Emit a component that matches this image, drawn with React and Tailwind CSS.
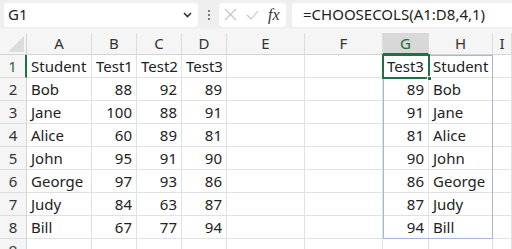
import React from 'react';

const cols = ['A', 'B', 'C', 'D', 'E', 'F', 'G', 'H', 'I'];

// cell content per row: [A, B, C, D, G, H]
const rows = [
  ['Student', 'Test1', 'Test2', 'Test3', 'Test3', 'Student'],
  ['Bob', 88, 92, 89, 89, 'Bob'],
  ['Jane', 100, 88, 91, 91, 'Jane'],
  ['Alice', 60, 89, 81, 81, 'Alice'],
  ['John', 95, 91, 90, 90, 'John'],
  ['George', 97, 93, 86, 86, 'George'],
  ['Judy', 84, 63, 87, 87, 'Judy'],
  ['Bill', 67, 77, 94, 94, 'Bill'],
];

const Cell = ({ value }) => {
  const isNum = typeof value === 'number';
  return (
    <div
      className={`h-[23px] border-r border-b border-[#e1e1e1] bg-white px-[4px] leading-[23px] whitespace-nowrap overflow-visible ${
        isNum ? 'text-right' : 'text-left'
      }`}
    >
      {value ?? ''}
    </div>
  );
};

export default function App() {
  return (
    <div className="w-[512px] h-[249px] overflow-hidden bg-white text-[#222] font-['Noto_Sans',sans-serif]">
      {/* Formula bar */}
      <div className="h-[29px] bg-[#efefef] flex items-center gap-0 pl-[4px]">
        <div className="w-[194px] h-[24px] bg-white rounded-[4px] flex items-center justify-between pl-[4px] pr-[6px] text-[15px]">
          <span>G1</span>
          <svg width="9" height="6" viewBox="0 0 9 6">
            <path d="M1 1l3.5 3.5L8 1" fill="none" stroke="#333" strokeWidth="1.6" />
          </svg>
        </div>
        <div className="w-[21px] flex flex-col items-center gap-[2px]">
          <span className="w-[2px] h-[2px] bg-[#555] rounded-full" />
          <span className="w-[2px] h-[2px] bg-[#555] rounded-full" />
          <span className="w-[2px] h-[2px] bg-[#555] rounded-full" />
        </div>
        <div className="w-[67px] h-[24px] bg-white rounded-[4px] flex items-center pl-[5px] gap-[9px]">
          <svg width="13" height="13" viewBox="0 0 13 13">
            <path d="M1 1l11 11M12 1L1 12" stroke="#c4c4c4" strokeWidth="1.1" />
          </svg>
          <svg width="13" height="10" viewBox="0 0 13 10">
            <path d="M1 5l4 4 7-8" fill="none" stroke="#c4c4c4" strokeWidth="1.1" />
          </svg>
          <span className="font-['Liberation_Serif',serif] italic text-[16px] text-[#333] leading-none">fx</span>
        </div>
        <div className="ml-[6px] flex-1 h-[24px] bg-white rounded-l-[4px] flex items-center pl-[11px] text-[15px]">
          =CHOOSECOLS(A1:D8,4,1)
        </div>
      </div>
      <div className="h-[4px] bg-[#f5f5f5]" />

      {/* Grid */}
      <div className="relative text-[15px]">
        <div className="grid grid-cols-[27px_65px_45px_45px_45px_78px_78px_46px_64px_1fr]">
          {/* header row */}
          <div className="h-[22px] bg-[#f5f5f5] border-r border-b border-[#d4d4d4] relative">
            <svg className="absolute right-[2px] bottom-[2px]" width="16" height="16" viewBox="0 0 16 16">
              <path d="M16 0L16 16L0 16Z" fill="#dcdcdc" />
            </svg>
          </div>
          {cols.map((c) => (
            <div
              key={c}
              className={`h-[22px] leading-[21px] text-center border-r border-[#dcdcdc] ${
                c === 'G'
                  ? 'bg-[#d8d8d8] text-[#1e6b3a] border-b-2 border-b-[#1e7145]'
                  : 'bg-[#f5f5f5] text-[#333] border-b border-b-[#d4d4d4]'
              }`}
            >
              {c}
            </div>
          ))}

          {/* data rows */}
          {rows.map((r, i) => (
            <React.Fragment key={i}>
              <div
                className={`h-[23px] leading-[23px] text-center bg-[#f5f5f5] border-b border-[#dcdcdc] ${
                  i === 0 ? 'text-[#1e6b3a] border-r-2 border-r-[#1e7145]' : 'text-[#333] border-r border-r-[#d4d4d4]'
                }`}
              >
                {i + 1}
              </div>
              <Cell value={r[0]} />
              <Cell value={r[1]} />
              <Cell value={r[2]} />
              <Cell value={r[3]} />
              <Cell />
              <Cell />
              <Cell value={r[4]} />
              <Cell value={r[5]} />
              <Cell />
            </React.Fragment>
          ))}

          {/* row 9 */}
          <div className="h-[23px] leading-[23px] text-center bg-[#f5f5f5] border-r border-[#d4d4d4] text-[#333]">9</div>
          {cols.map((c) => (
            <div key={c} className="h-[23px] border-r border-[#e1e1e1] bg-white" />
          ))}
        </div>

        {/* spill range outline G1:H8 */}
        <div className="absolute left-[383px] top-[22px] w-[110px] h-[184px] border border-[#a6b6d8] pointer-events-none" />
        {/* active cell G1 */}
        <div className="absolute left-[382px] top-[21px] w-[48px] h-[25px] border-2 border-[#1e7145] pointer-events-none" />
        <div className="absolute left-[427px] top-[43px] w-[5px] h-[5px] bg-[#1e7145] border border-white" />
      </div>
    </div>
  );
}
